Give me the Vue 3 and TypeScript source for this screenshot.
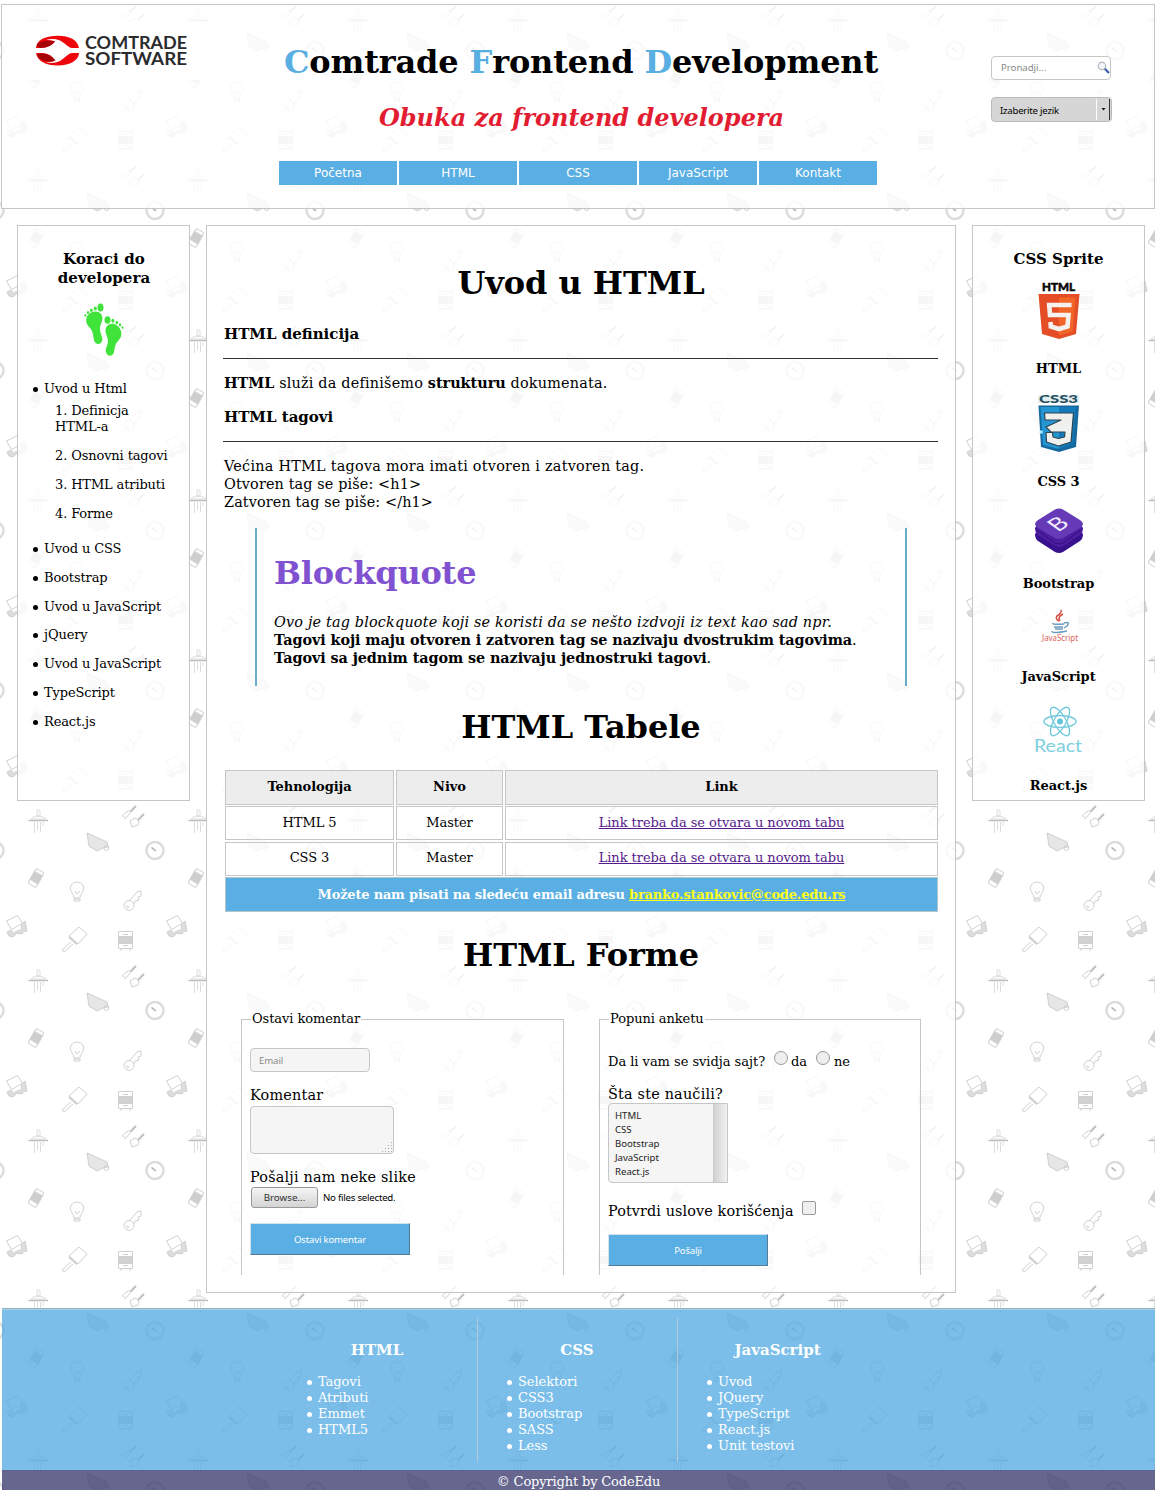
<script setup lang="ts">
interface FooterColumn {
  title: string
  items: string[]
}

const nav: string[] = ['Početna', 'HTML', 'CSS', 'JavaScript', 'Kontakt']
const chapters: string[] = ['Definicja HTML-a', 'Osnovni tagovi', 'HTML atributi', 'Forme']
const steps: string[] = ['Uvod u CSS', 'Bootstrap', 'Uvod u JavaScript', 'jQuery', 'Uvod u JavaScript', 'TypeScript', 'React.js']
const rows: string[] = ['HTML 5', 'CSS 3']
const topics: string[] = ['HTML', 'CSS', 'Bootstrap', 'JavaScript', 'React.js']
const columns: FooterColumn[] = [
  { title: 'HTML', items: ['Tagovi', 'Atributi', 'Emmet', 'HTML5'] },
  { title: 'CSS', items: ['Selektori', 'CSS3', 'Bootstrap', 'SASS', 'Less'] },
  { title: 'JavaScript', items: ['Uvod', 'JQuery', 'TypeScript', 'React.js', 'Unit testovi'] },
]
</script>

<template>
  <div class="page">
    <header class="panel header">
      <div class="brand">
        <svg class="logo" width="190" height="58" viewBox="0 0 190 58">
          <path d="M14 26C14 18 24 13.800 36 13.800C47 13.800 56 18 57 26H50C46 25.500 43 21 38 18.500Q31 16 24 18Q30 17.500 33 19.500C30 23 26 26 19 26Z" fill="#ee060c" />
          <path d="M15 22Q21 17 33 19.500Q29 25 19 26Q15 25 15 22Z" fill="#a50308" />
          <path d="M57 31C57 38 48 43.500 36 43.500C24 43.500 15 39 14 31H20C27 31 30 35 33.500 38.500Q28 41 22 39.500Q30 42.500 38 39C43 36 46 31.500 50 31Z" fill="#ee060c" />
          <path d="M16 32Q27 30 33.500 38.500Q23 42 16 35Z" fill="#a50308" />
          <text x="63" y="27" textLength="102" lengthAdjust="spacingAndGlyphs">COMTRADE</text>
          <text x="63" y="42.500" textLength="102" lengthAdjust="spacingAndGlyphs">SOFTWARE</text>
        </svg>
      </div>
      <div class="heading">
        <h1 class="site-title"><b>C</b>omtrade <b>F</b>rontend <b>D</b>evelopment</h1>
        <h2 class="subtitle">Obuka za frontend developera</h2>
        <nav class="nav">
          <a v-for="item in nav" :key="item">{{ item }}</a>
        </nav>
      </div>
      <div class="tools">
        <div class="search">
          <span>Pronadji...</span>
          <svg width="14" height="14" viewBox="0 0 14 14">
            <circle cx="5" cy="5" r="3.700" fill="#f4f8fd" stroke="#bcbcc4" stroke-width="1.400" />
            <path d="M7.800 7.800L12 12" stroke="#3a5fa5" stroke-width="2.200" />
          </svg>
        </div>
        <div class="language">
          <span>Izaberite jezik</span>
          <i><svg width="5" height="3" viewBox="0 0 5 3"><path d="M.5 0H4.500L2.500 2.500Z" fill="#111" /></svg></i>
        </div>
      </div>
    </header>

    <div class="columns">
      <aside class="panel side">
        <h3>Koraci do<br />developera</h3>
        <svg class="feet" width="42" height="54" viewBox="0 0 42 54" fill="#3fe33a">
          <path d="M3.500 15C5 9 14 6 18 11C22 16 16.500 21 17 26C17 31 20.500 35 19 38C18 42 12 42 11 37C10 32 10 28 7 25C4 22 2.500 19 3.500 15Z" />
          <ellipse cx="17.500" cy="4.500" rx="3" ry="4" />
          <ellipse cx="12.300" cy="5.500" rx="1.500" ry="2" />
          <ellipse cx="8.400" cy="7.200" rx="1.400" ry="1.800" />
          <ellipse cx="5" cy="9.500" rx="1.200" ry="1.600" />
          <ellipse cx="2.300" cy="12.500" rx="1" ry="1.200" />
          <path d="M38 28C36 21 28 18.500 24 23C20 28 25 33 25 38C25 43 22 45 23 49C24 54 30 54 31 49C32 44 32 41 35 38C38 35 39 32 38 28Z" />
          <ellipse cx="24.500" cy="17" rx="3" ry="3.800" />
          <ellipse cx="29.800" cy="17.800" rx="1.500" ry="2" />
          <ellipse cx="33.800" cy="19.500" rx="1.400" ry="1.800" />
          <ellipse cx="37" cy="21.800" rx="1.200" ry="1.600" />
          <ellipse cx="39.500" cy="24.500" rx="1" ry="1.200" />
        </svg>
        <ul class="steps">
          <li class="first">Uvod u Html</li>
          <li class="nested">
            <ol>
              <li v-for="(chapter, i) in chapters" :key="chapter">{{ i + 1 }}. {{ chapter }}</li>
            </ol>
          </li>
          <li v-for="(step, i) in steps" :key="i">{{ step }}</li>
        </ul>
      </aside>

      <main class="panel main">
        <h1>Uvod u HTML</h1>
        <h4>HTML definicija</h4>
        <hr />
        <p><strong>HTML</strong> služi da definišemo <strong>strukturu</strong> dokumenata.</p>
        <h4>HTML tagovi</h4>
        <hr />
        <p>Većina HTML tagova mora imati otvoren i zatvoren tag.<br /><span class="syntax">Otvoren tag se piše: &lt;h1&gt;<br />Zatvoren tag se piše: &lt;/h1&gt;</span></p>
        <blockquote>
          <h1>Blockquote</h1>
          <p><em>Ovo je tag blockquote koji se koristi da se nešto izdvoji iz text kao sad npr.</em><br /><strong>Tagovi koji maju otvoren i zatvoren tag se nazivaju dvostrukim tagovima</strong>.<br /><strong>Tagovi sa jednim tagom se nazivaju jednostruki tagovi</strong>.</p>
        </blockquote>
        <h1 class="tables-title">HTML Tabele</h1>
        <div class="table">
          <div class="row head"><span>Tehnologija</span><span>Nivo</span><span>Link</span></div>
          <div v-for="row in rows" :key="row" class="row">
            <span>{{ row }}</span><span>Master</span><span><a>Link treba da se otvara u novom tabu</a></span>
          </div>
          <div class="contact">Možete nam pisati na sledeću email adresu <a>branko.stankovic@code.edu.rs</a></div>
        </div>
        <h1 class="forms-title">HTML Forme</h1>
        <div class="forms">
          <section class="form comment">
            <div class="legend"><span>Ostavi komentar</span></div>
            <div class="field email">Email</div>
            <label>Komentar</label>
            <div class="field area">
              <svg width="12" height="12" viewBox="0 0 12 12" fill="#aaa">
                <path d="M10 1h1v1h-1zM10 4h1v1h-1zM7 4h1v1h-1zM10 7h1v1h-1zM7 7h1v1h-1zM4 7h1v1h-1zM10 10h1v1h-1zM7 10h1v1h-1zM4 10h1v1h-1zM1 10h1v1h-1z" />
              </svg>
            </div>
            <label class="upload-label">Pošalji nam neke slike</label>
            <div class="upload"><button class="browse">Browse...</button><span>No files selected.</span></div>
            <button class="submit">Ostavi komentar</button>
          </section>
          <section class="form survey">
            <div class="legend"><span>Popuni anketu</span></div>
            <div class="question"><span class="ask">Da li vam se svidja sajt?</span><i class="radio"></i><span class="yes">da</span><i class="radio"></i><span>ne</span></div>
            <label>Šta ste naučili?</label>
            <div class="list"><div><span v-for="topic in topics" :key="topic">{{ topic }}</span></div><i></i></div>
            <div class="terms"><label>Potvrdi uslove korišćenja</label><i></i></div>
            <button class="submit">Pošalji</button>
          </section>
        </div>
      </main>

      <aside class="panel side sprites">
        <h3>CSS Sprite</h3>
        <svg class="sprite s1" width="44" height="58" viewBox="0 0 44 58">
          <text x="5" y="9" class="black" textLength="33" lengthAdjust="spacingAndGlyphs">HTML</text>
          <path d="M1.500 12H42.500L39 52L22 57L5 52Z" fill="#e44d26" />
          <path d="M22 15.500H38.700L35.800 49.500L22 53.500Z" fill="#f16529" />
          <path d="M34.500 23H12.200L13 33H31.500L30.500 44.500L22 47L13.800 44.500L13.500 40" fill="none" stroke="#f5f1ee" stroke-width="4.600" />
        </svg>
        <h5>HTML</h5>
        <svg class="sprite s2" width="44" height="58" viewBox="0 0 44 58">
          <rect x="1" y="0" width="41" height="8" fill="#e3eef1" />
          <text x="2" y="7.500" class="black css" textLength="39" lengthAdjust="spacingAndGlyphs">CSS3</text>
          <path d="M1.500 10.500H42L39 52L22 57L4 52Z" fill="#16699f" />
          <path d="M3.500 12H22V54L6 50Z" fill="#2497d3" />
          <path d="M22 12H39L36 49L22 54Z" fill="#1479b8" />
          <path d="M7.500 18H36.500L34 47L21.500 51L9.500 47L9 37.500H15.500L16 42L21.500 43.500L27.500 42L28 37H14L9 32L24 25H8Z" fill="#f0f0ee" stroke="#2c4450" stroke-width="1.200" stroke-linejoin="round" />
          <circle cx="4" cy="37" r="1.800" fill="#a8edff" />
        </svg>
        <h5>CSS 3</h5>
        <svg class="sprite s3" width="50" height="46" viewBox="0 0 50 46">
          <path d="M1 26Q1 31 4 33L21 44Q25 46 29 44L46 33Q49 31 49 26L47 24L49 20H1L3 24Z" fill="#38128d" />
          <path d="M1 20Q1 25 4 27L21 38Q25 40 29 38L46 27Q49 25 49 20L47 17H3Z" fill="#4c1d9f" />
          <path d="M3 22L21 35Q25 37 29 35L47 22" fill="none" stroke="#32117f" />
          <path d="M21 1.500Q25-.5 29 1.500L46 12Q52 16 46 20L29 30Q25 32 21 30L4 20Q-2 16 4 12Z" fill="#673bb8" />
          <text class="mark" transform="matrix(.92 -.6 .86 .62 24 24.500)">B</text>
        </svg>
        <h5>Bootstrap</h5>
        <svg class="sprite s4" width="40" height="36" viewBox="0 0 40 36">
          <g fill="none" stroke-width="1.500">
            <path d="M22 1Q23 4 18 7Q16 10 20 12M24 5Q18 8 21 12" stroke="#d4483f" />
            <path d="M14 14Q13 16 25 15M15 18H24M16 20H24M13 22Q12 25 28 22M25 14Q32 12 28 17L25 19" stroke="#6f9dbd" />
          </g>
          <text x="3" y="31.500" class="java" textLength="36" lengthAdjust="spacingAndGlyphs">JavaScript</text>
        </svg>
        <h5>JavaScript</h5>
        <svg class="sprite s5" width="50" height="47" viewBox="0 0 50 47">
          <g fill="none" stroke="#73cadb" stroke-width="1.400">
            <ellipse cx="26" cy="15.500" rx="16" ry="6" />
            <ellipse cx="26" cy="15.500" rx="16" ry="6" transform="rotate(60 26 15.500)" />
            <ellipse cx="26" cy="15.500" rx="16" ry="6" transform="rotate(120 26 15.500)" />
          </g>
          <circle cx="26" cy="15.500" r="3" fill="#60c5da" />
          <text x="0" y="45.500" class="react" textLength="48" lengthAdjust="spacingAndGlyphs">React</text>
        </svg>
        <h5>React.js</h5>
      </aside>
    </div>

    <footer>
      <div class="links">
        <div v-for="column in columns" :key="column.title" class="link-column">
          <h3>{{ column.title }}</h3>
          <ul><li v-for="item in column.items" :key="item">{{ item }}</li></ul>
        </div>
      </div>
      <div class="copyright">© Copyright by CodeEdu</div>
    </footer>
  </div>
</template>

<style>
body { margin: 0; background: #fff; }
</style>

<style scoped>
* { box-sizing: border-box; }
h1, h2, h3, h4, h5, p, ul, ol, blockquote { margin: 0; padding: 0; }
ul, ol { list-style: none; }
h1, h2 { white-space: nowrap; }
button { margin: 0; padding: 0; }

.page {
  width: 1155px;
  height: 1490px;
  overflow: hidden;
  padding: 4px 0 0 1px;
  font: 14.4px/18px "DejaVu Serif", serif;
  color: #000;
  background: #fff url("data:image/svg+xml,%3Csvg xmlns='http://www.w3.org/2000/svg' width='160' height='160' fill='none' stroke='%23cfcfcf'%3E%3Cpath d='M37 10h3v6h-3zM31 19q2-3 7-3t8 3zM34.500 22v11M37.500 22v8M40.500 22v10M43 22v4' stroke-width='.7'/%3E%3Cpath d='M28.500 20.500h19.500' stroke-width='1.500' stroke='%23bdbdbd'/%3E%3Cpath d='M122 16l7-6M125 19l5-6M123 16l3 3'/%3E%3Cpath d='M130 12l6-6M138 20l6-6' stroke-width='2.200' stroke='%23c2c2c2'/%3E%3Cpath d='M130 21l2 6 6-2 1-4-4-3z'/%3E%3Cpath d='M87 33l20 9 1 5-5 1-6 3-8-5z' fill='%23e6e6e6'/%3E%3Ccircle cx='106.500' cy='48' r='2.500'/%3E%3Ccircle cx='155' cy='50.500' r='8.500' stroke-width='2.500' stroke='%23dcdcdc'/%3E%3Cpath d='M151.500 47.500l4.500 3.500' stroke='%23aaa' stroke-width='1.500'/%3E%3Ccircle cx='-5' cy='50.500' r='8.500' stroke-width='2.500' stroke='%23dcdcdc'/%3E%3Cg transform='rotate(30 36 78)'%3E%3Crect x='31.500' y='69.500' width='9' height='17' rx='1.500'/%3E%3Cpath d='M31.500 73h9v9h-9z' fill='%23cecece'/%3E%3C/g%3E%3Cpath d='M74 98q0-3-2-5c-4-6 0-11 5-11s9 5 5 11q-2 2-2 5zM74 99h6v2h-6zM75 91l2 3 3-3'/%3E%3Ccircle cx='129' cy='105.500' r='5'/%3E%3Ccircle cx='127.500' cy='107' r='1'/%3E%3Cpath d='M130 100l7-8 4-1v5l-3 1 1 3-4 1-1 3'/%3E%3Cpath d='M6.500 121l11-5.500 5 8-11 6z'/%3E%3Cpath d='M7 132l4-2 2 3 9-4-1-5 4-3 2 10-4 1-1 2-5-1-4 4-4-1z' fill='%23dedede'/%3E%3Cpath d='M79 127l8 7-9 10-9-8zM71 142l-9 8 2 2 9-8'/%3E%3Cpath d='M69 137l8 7' stroke-width='2'/%3E%3Cpath d='M118.500 131.500h14v17h-14zM121 149v2M130 149v2M123 134.500h5M123 145.500h5'/%3E%3Cpath d='M118.500 136.500h14v7h-14z' fill='%23d2d2d2'/%3E%3C/svg%3E") 0 0 / 160px 160px;
}

.panel {
  border: 1px solid #c6c6c6;
  background: rgba(255, 255, 255, 0.82);
}

.header { display: flex; width: 1154px; height: 205px; }
.brand { width: 277px; padding: 17px 0 0 20px; }
.logo { display: block; background: #fff; }
.logo text { font: 700 16.5px Lato, sans-serif; fill: #2b2b2d; }
.heading { width: 606px; }
.site-title { margin-top: 38px; padding-right: 2px; font-size: 32px; line-height: 38px; letter-spacing: -0.14px; text-align: center; }
.site-title b { color: #59aee2; }
.subtitle { margin-top: 23px; padding-right: 1px; font-size: 24px; line-height: 28px; font-style: italic; text-align: center; color: #e21d32; }
.nav { display: flex; gap: 2px; margin-top: 29px; }
.nav a { width: 118px; background: #59aee3; color: #fff; font: 12px/24px "DejaVu Sans", sans-serif; text-align: center; }
.tools { padding: 51px 0 0 106px; font: 9.6px/21px "Noto Sans", sans-serif; }
.search { display: flex; justify-content: space-between; width: 120px; height: 24px; padding-left: 9px; border: 1px solid #c6c6c6; border-radius: 4px; background: #fff; color: #888; }
.search svg { margin: 4px -1px 0 0; }
.language { display: flex; justify-content: space-between; width: 121px; height: 25px; margin-top: 17px; padding: 1px 1px 0 8px; border: 1px solid #bbb; border-radius: 4px; background: #d6d6d6; line-height: 23px; }
.language span { font-size: 9.600px; letter-spacing: -0.22px; }
.language i { display: flex; align-items: center; justify-content: center; width: 14px; height: 21px; border-left: 1px solid #fff; border-right: 1px solid #333; }

.columns { display: flex; align-items: flex-start; gap: 16px; margin: 16px 0 0 16px; }
.side { width: 173px; height: 576px; padding-top: 24px; }
.side h3 { padding-left: 1px; font-size: 15px; line-height: 19px; letter-spacing: 0.1px; text-align: center; }
.feet { display: block; margin: 15px 0 0 65px; }
.steps { margin-top: 24px; font-size: 13px; line-height: 16px; letter-spacing: -0.13px; }
.steps > li { position: relative; margin-bottom: 12.800px; padding-left: 26px; }
.steps > li:not(.nested)::before { content: ""; position: absolute; left: 15px; top: 6px; width: 5px; height: 5px; border-radius: 50%; background: #000; }
.steps > .first { margin-bottom: 6px; }
.steps > .nested { margin-bottom: 19px; padding-left: 37px; }
.nested li { width: 120px; margin-bottom: 13px; }
.nested li:first-child { width: 90px; }

.main { width: 750px; height: 1068px; padding: 0 17px 0 16px; }
.main h1 { padding-left: 1px; font-size: 32px; line-height: 38px; letter-spacing: -0.05px; text-align: center; }
.main > h1:first-child { margin-top: 38px; }
.main h4 { margin: 16px 0 15px 1px; font-size: 15px; line-height: 18px; }
.main > h1 + h4 { margin-top: 23px; }
.main hr { height: 1px; margin: 0; border: 0; background: #333; }
.main > p { margin: 15px 0 0 1px; letter-spacing: 0.25px; }
.main > h4 + hr + p:has(strong) { letter-spacing: 0.2px; }
.main > p strong { letter-spacing: 0; }
.syntax { letter-spacing: 0.13px; }
.main blockquote { width: 652px; height: 158px; margin: 17px 0 0 32px; padding: 26px 17px 0; border: solid #67aecb; border-width: 0 2px; }
blockquote p { margin-top: 21px; white-space: nowrap; }
blockquote em { letter-spacing: 0.18px; }
blockquote strong { letter-spacing: -0.09px; }
.main blockquote h1 { padding: 0; text-align: left; letter-spacing: -0.2px; color: #8051d0; }
.main .tables-title { margin-top: 22px; }

.table { width: 713px; margin: 24px 0 0 2px; font-size: 13px; line-height: 32px; letter-spacing: -0.05px; text-align: center; }
.row { display: grid; grid-template-columns: 169px 107px 433px; gap: 2px; height: 34px; margin-bottom: 2px; }
.row span { border: 1px solid #c6c6c6; }
.row:nth-child(3) { line-height: 30px; }
.row a { color: #551a8b; text-decoration: underline; }
.head { height: 35px; margin-bottom: 1px; font-weight: bold; }
.head span { background: #ededed; }
.contact { height: 35px; margin-top: -1px; border: 1px solid #b5c5cc; background: #59aee3; color: #fff; font-weight: bold; line-height: 33px; letter-spacing: -0.2px; }
.contact a { color: #ffff18; text-decoration: underline; }
.main .forms-title { margin-top: 24px; }

.forms { display: flex; gap: 35px; margin: 45px 0 0 18px; font-size: 14.400px; }
.form { width: 323px; height: 256px; padding: 0 8px; border: solid #c6c6c6; border-width: 0 1px; }
.survey { width: 322px; }
.legend { display: flex; gap: 1px; height: 16px; margin: 0 -8px; font-size: 13px; line-height: 16px; letter-spacing: -0.08px; white-space: nowrap; }
.legend::before, .legend::after { content: ""; height: 1px; background: #c6c6c6; }
.legend::before { width: 9px; }
.legend::after { flex: 1; }
.legend span { margin-top: -8px; }
.form label { display: block; line-height: 18px; letter-spacing: 0.2px; }
.field { border: 1px solid #c6c6c6; border-radius: 4px; background: #f5f5f5; }
.email { width: 120px; height: 24px; margin: 13px 0 14px; padding-left: 8px; color: #8a8a8a; font: 9.6px/23px "Noto Sans", sans-serif; letter-spacing: -0.1px; }
.area { display: flex; align-items: flex-end; justify-content: flex-end; width: 144px; height: 48px; margin-top: 2px; }
.form .upload-label { margin-top: 14px; }
.upload { display: flex; gap: 5px; height: 21px; margin: 1px 0 0 1px; font: 9.700px/22px "Noto Sans", sans-serif; letter-spacing: -0.25px; }
.browse { width: 67px; height: 21px; padding-bottom: 1px; border: 1px solid #999; border-radius: 3px; background: linear-gradient(#f5f5f5, #d4d4d4); color: #333; font: 9.800px "Noto Sans", sans-serif; }
.submit { display: block; width: 160px; height: 32px; margin-top: 15px; border: 1px solid; border-color: #d5e2ea #557c95 #557c95 #d5e2ea; background: #59aee3; color: #fff; font: 9.600px "Noto Sans", sans-serif; letter-spacing: -0.2px; }
.question { display: flex; height: 16px; margin: 19px 0 15px; font-size: 13px; line-height: 16px; letter-spacing: -0.03px; }
.ask { width: 166px; }
.yes { width: 25px; }
.radio { width: 14px; height: 14px; margin: -3px 3px 0 0; border: 1px solid #999; border-radius: 50%; background: #efefef; }
.yes + .radio { margin-right: 4px; }
.list { display: flex; width: 120px; height: 80px; border: 1px solid #c6c6c6; border-radius: 4px 0 0 4px; background: #f5f5f5; font: 9.6px/14px "Noto Sans", sans-serif; color: #222; }
.list div { flex: 1; padding: 5px 6px; }
.list span { display: block; }
.list i { width: 14px; border-left: 1px solid #ccc; background: linear-gradient(90deg, #d2d2d2, #f1f1f1); }
.terms { display: flex; height: 18px; margin-top: 19px; }
.terms label { width: 194px; letter-spacing: 0.1px; }
.terms i { width: 14px; height: 14px; margin-top: -1px; border: 1px solid #999; border-radius: 2px; background: #f0f0f0; }
.terms + .submit { margin-top: 14px; }

.sprites h3 { padding: 0; letter-spacing: 0; }
.sprites h5 { font-size: 13px; line-height: 16px; letter-spacing: -0.05px; text-align: center; }
.sprite { display: block; overflow: visible; margin: 0 auto; }
.s1 { margin-top: 13px; margin-bottom: 21px; }
.s2 { margin-top: 18px; margin-bottom: 21px; }
.s3 { margin-top: 18px; margin-bottom: 22px; }
.s4 { margin-top: 17px; margin-bottom: 24px; }
.s5 { margin-top: 21px; margin-bottom: 25px; }
.black { font: 900 11px Lato, sans-serif; fill: #080808; stroke: #080808; stroke-width: 0.5px; }
.css { fill: #244f5f; stroke: none; }
.mark { font: 21px Lato, sans-serif; fill: #f4edff; }
.java { font: 9px "Noto Sans", sans-serif; fill: #dc6258; }
.react { font: 18px Lato, sans-serif; fill: #7fcfdd; }

footer { margin: 15px 0 0 1px; }
.links { display: flex; height: 162px; padding: 9px 0 8px 276px; border-top: 1px solid #8eb2c6; background: rgba(89, 174, 227, 0.8); box-shadow: inset 0 1px #a9cfe4; color: #fff; }
.link-column { width: 200px; border-right: 1px solid #b3cad6; }
.link-column:last-child { border: 0; }
.link-column h3 { margin-top: 23px; padding-right: 1px; font-size: 15px; line-height: 18px; text-align: center; }
.link-column ul { margin: 15px 0 0 40px; font-size: 13px; line-height: 16px; letter-spacing: -0.05px; }
.link-column li { position: relative; }
.link-column li::before { content: ""; position: absolute; left: -11px; top: 6px; width: 5px; height: 5px; border-radius: 50%; background: #fff; }
.copyright { height: 24px; padding-top: 3px; border-top: 1px solid #5f6493; background: rgba(65, 64, 114, 0.8); color: #fff; font-size: 13px; line-height: 16px; letter-spacing: -0.15px; text-align: center; }
</style>
